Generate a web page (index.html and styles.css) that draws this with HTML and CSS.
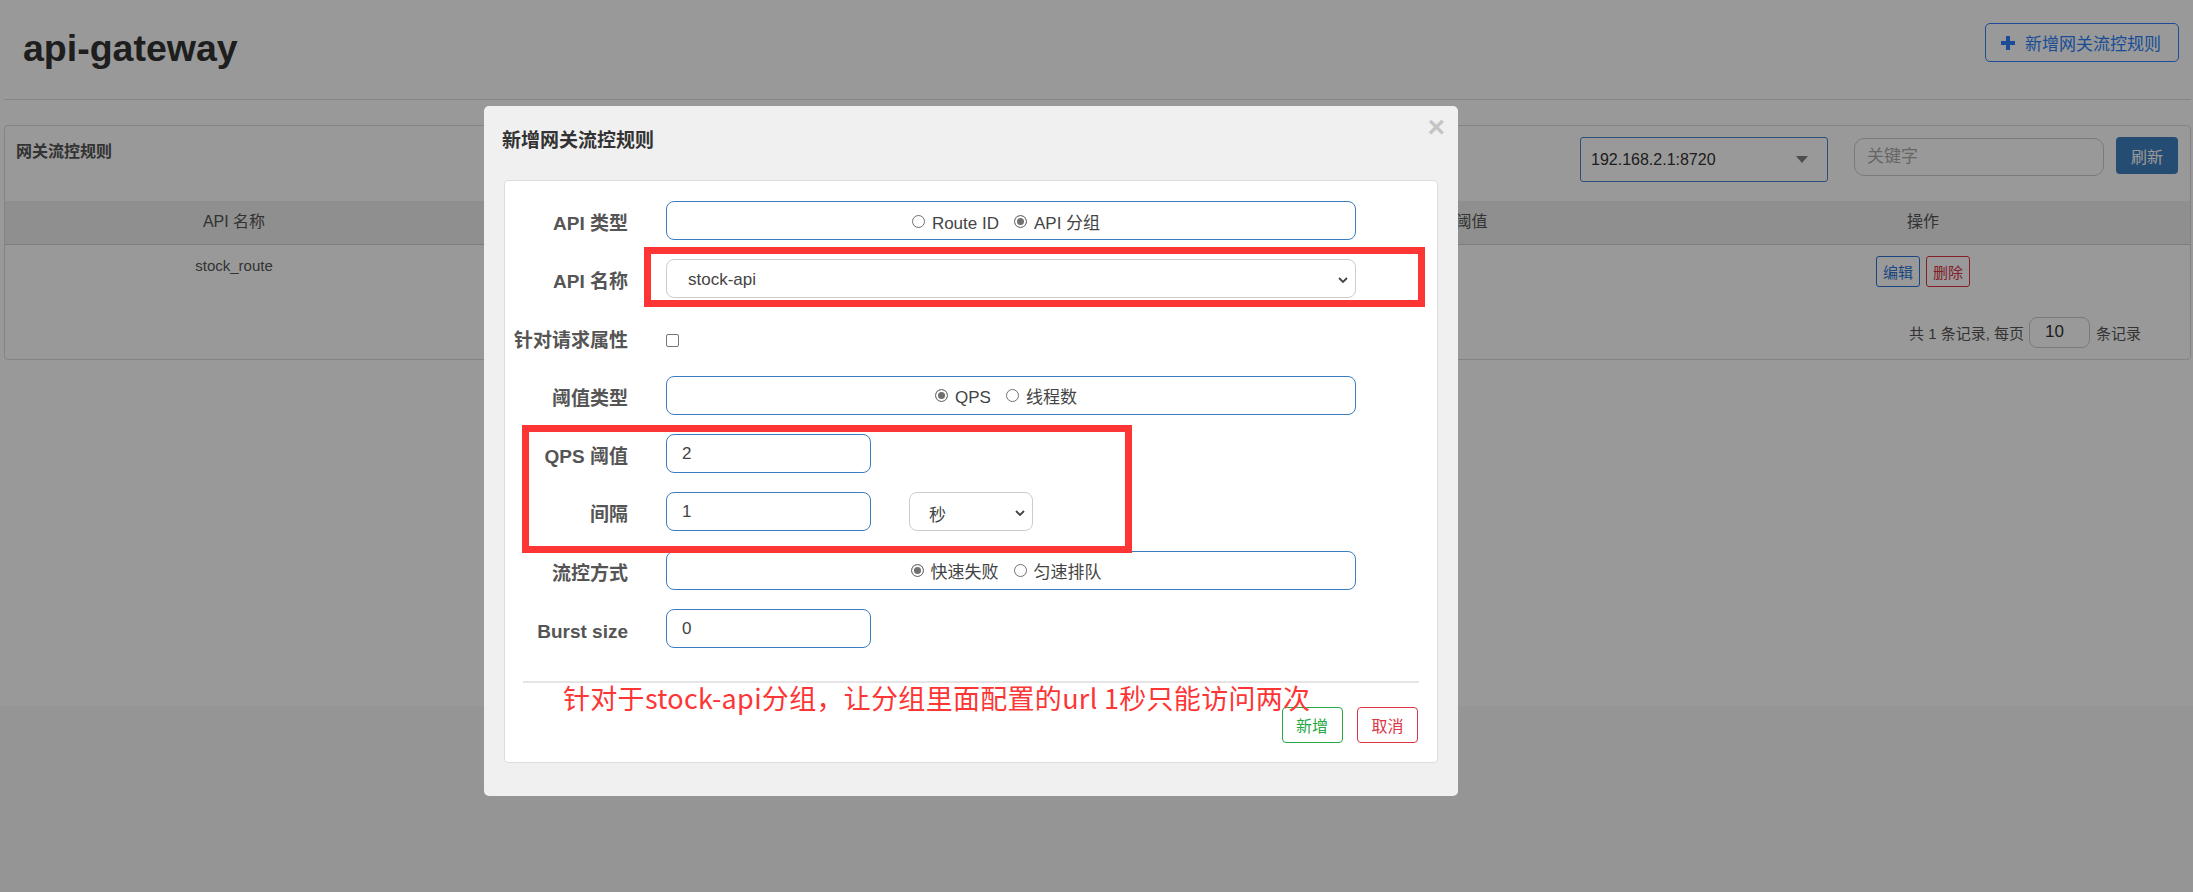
FILE: index.html
```html
<!DOCTYPE html>
<html lang="zh-CN">
<head>
<meta charset="utf-8">
<title>api-gateway</title>
<link rel="stylesheet" href="styles.css">
</head>
<body>
<div class="page">
  <header class="page-header">
    <h1 class="app-title">api-gateway</h1>
    <button class="btn-add-rule" type="button">
      <svg class="icon-plus" viewBox="0 0 14 14"><rect x="5" y="0" width="4" height="14"/><rect x="0" y="5" width="14" height="4"/></svg>
      <span>新增网关流控规则</span>
    </button>
  </header>

  <section class="panel">
    <div class="panel-head">
      <div class="panel-title">网关流控规则</div>
      <div class="panel-tools">
        <div class="machine-select">
          <span>192.168.2.1:8720</span>
          <svg class="caret" viewBox="0 0 12 7"><path d="M0 0h12L6 7z"/></svg>
        </div>
        <input class="search-input" type="text" placeholder="关键字">
        <button class="btn-refresh" type="button">刷新</button>
      </div>
    </div>
    <table class="rules-table">
      <colgroup>
        <col class="col-name"><col class="col-mid"><col class="col-mid"><col class="col-count"><col>
      </colgroup>
      <thead>
        <tr><th>API 名称</th><th>API 类型</th><th>阈值类型</th><th>单机阈值</th><th>操作</th></tr>
      </thead>
      <tbody>
        <tr>
          <td>stock_route</td>
          <td>Route ID</td>
          <td>QPS</td>
          <td></td>
          <td><div class="row-actions"><button class="btn-edit" type="button">编辑</button><button class="btn-del" type="button">删除</button></div></td>
        </tr>
      </tbody>
    </table>
    <div class="pager">
      <span>共 1 条记录, 每页</span>
      <input class="page-size" type="text" value="10">
      <span>条记录</span>
    </div>
  </section>
</div>

<div class="backdrop"></div>

<div class="modal">
  <div class="modal-header">
    <h4 class="modal-title">新增网关流控规则</h4>
  </div>
  <span class="modal-close">×</span>
  <div class="modal-body">
    <div class="form-card">
      <div class="form-grid">
        <label class="f-label">API 类型</label>
        <div class="f-box">
          <span class="radio"><span class="radio-dot"></span>Route ID</span>
          <span class="radio"><span class="radio-dot checked"></span>API 分组</span>
        </div>

        <label class="f-label">API 名称</label>
        <div class="f-select"><span>stock-api</span><svg class="chev" viewBox="0 0 10 6"><polyline points="1,1 5,5 9,1"/></svg></div>

        <label class="f-label">针对请求属性</label>
        <div class="check-cell"><span class="checkbox"></span></div>

        <label class="f-label">阈值类型</label>
        <div class="f-box">
          <span class="radio"><span class="radio-dot checked"></span>QPS</span>
          <span class="radio"><span class="radio-dot"></span>线程数</span>
        </div>

        <label class="f-label">QPS 阈值</label>
        <div class="f-cell"><input class="f-input" type="text" value="2"></div>

        <label class="f-label">间隔</label>
        <div class="f-cell">
          <input class="f-input" type="text" value="1">
          <div class="f-select unit"><span>秒</span><svg class="chev" viewBox="0 0 10 6"><polyline points="1,1 5,5 9,1"/></svg></div>
        </div>

        <label class="f-label">流控方式</label>
        <div class="f-box">
          <span class="radio"><span class="radio-dot checked"></span>快速失败</span>
          <span class="radio"><span class="radio-dot"></span>匀速排队</span>
        </div>

        <label class="f-label">Burst size</label>
        <div class="f-cell"><input class="f-input" type="text" value="0"></div>
      </div>
      <div class="form-divider"></div>
      <div class="form-actions">
        <button class="btn-save" type="button">新增</button>
        <button class="btn-cancel" type="button">取消</button>
      </div>
    </div>
  </div>
  <div class="mark mark-name"></div>
  <div class="mark mark-qps"></div>
  <div class="mark-note">针对于stock-api分组，让分组里面配置的url 1秒只能访问两次</div>
</div>
</body>
</html>
```

FILE: styles.css
```css
* { box-sizing: border-box; }
html, body { margin: 0; }
body {
  width: 2193px;
  height: 892px;
  overflow: hidden;
  background: #f8f8f8;
  font-family: "Liberation Sans", "Noto Sans CJK SC", Arial, sans-serif;
  color: #555;
}

.page {
  background: #fff;
  min-height: 706px;
  padding: 0 2px 0 4px;
}

.page-header {
  height: 100px;
  border-bottom: 1px solid #e0e0e0;
  display: flex;
  justify-content: space-between;
  align-items: flex-start;
  padding: 23px 12px 0 19px;
}
.app-title {
  margin: 5px 0 0;
  font-size: 37.5px;
  line-height: 40px;
  font-weight: 700;
  color: #333;
}
.btn-add-rule {
  display: flex;
  align-items: center;
  width: 194px;
  height: 39px;
  padding: 0 0 0 15px;
  border: 1px solid #2d7ff9;
  border-radius: 5px;
  background: #fff;
  color: #2d7ff9;
  font-family: inherit;
  font-size: 17px;
}
.icon-plus { width: 14px; height: 14px; fill: #2d7ff9; margin-right: 10px; }

.panel {
  margin-top: 25px;
  border: 1px solid #ddd;
  border-radius: 4px;
}
.panel-head {
  height: 75px;
  display: flex;
  justify-content: space-between;
  align-items: flex-start;
  padding: 11px 12px 0 11px;
}
.panel-title {
  margin-top: 3.5px;
  font-size: 16px;
  line-height: 22px;
  font-weight: 700;
  color: #555;
}
.panel-tools { display: flex; align-items: flex-start; }
.machine-select {
  width: 248px;
  height: 45px;
  display: flex;
  align-items: center;
  justify-content: space-between;
  padding: 0 19px 0 10px;
  border: 1px solid #4a86c8;
  border-radius: 3px;
  font-size: 16px;
  color: #333;
}
.caret { width: 12px; height: 7px; fill: #808080; }
.search-input {
  margin: 1px 0 0 26px;
  width: 250px;
  height: 38px;
  padding: 0 12px;
  border: 1px solid #ccc;
  border-radius: 10px;
  font-family: inherit;
  font-size: 17px;
  color: #333;
  outline: none;
}
.search-input::placeholder { color: #aaa; }
.btn-refresh {
  margin-left: 12px;
  width: 62px;
  height: 37px;
  border: 0;
  border-radius: 4px;
  background: #3f7fbf;
  color: #fff;
  font-family: inherit;
  font-size: 16px;
}

.rules-table {
  width: 100%;
  border-collapse: collapse;
  table-layout: fixed;
}
.col-name { width: 458px; }
.col-mid { width: 396px; }
.col-count { width: 401px; }
.rules-table th {
  height: 43px;
  padding: 0;
  background: #eee;
  border-bottom: 1px solid #d0d0d0;
  font-weight: 400;
  font-size: 16px;
  line-height: 20px;
  color: #555;
  text-align: center;
}
.rules-table td {
  padding: 11px 0;
  vertical-align: top;
  text-align: center;
  font-size: 15px;
  line-height: 20px;
  color: #555;
}
.row-actions { display: flex; justify-content: center; gap: 6px; }
.btn-edit, .btn-del {
  width: 44px;
  height: 31px;
  padding: 0;
  border: 1px solid;
  border-radius: 3px;
  background: #fff;
  font-family: inherit;
  font-size: 15px;
}
.btn-edit { color: #2a74d8; border-color: #2a74d8; }
.btn-del { color: #dc3545; border-color: #dc3545; }

.pager {
  display: flex;
  justify-content: flex-end;
  align-items: center;
  padding: 19px 49px 11px 0;
  font-size: 15px;
  color: #555;
}
.page-size {
  width: 61px;
  height: 31px;
  margin: 0 6px 0 5px;
  padding: 0 0 0 15px;
  border: 1px solid #ccc;
  border-radius: 8px;
  font-family: inherit;
  font-size: 17px;
  color: #333;
}

.backdrop {
  position: fixed;
  inset: 0;
  background: rgba(0, 0, 0, 0.4);
}

.modal {
  position: absolute;
  left: 484px;
  top: 106px;
  width: 974px;
  height: 690px;
  background: #f0f0f0;
  border-radius: 5px;
}
.modal-header {
  height: 74px;
  padding: 21px 0 0 18px;
}
.modal-title {
  margin: 0;
  font-size: 19px;
  line-height: 27px;
  font-weight: 700;
  color: #333;
}
.modal-close {
  position: absolute;
  top: 6px;
  right: 13px;
  font-size: 30px;
  line-height: 1;
  font-weight: 700;
  color: #c4c4c4;
}
.modal-body { padding: 0 20px; }
.form-card {
  background: #fff;
  border: 1px solid #ddd;
  border-radius: 4px;
  padding: 20px 0 19px;
}
.form-grid {
  display: grid;
  grid-template-columns: 123px 690px;
  grid-auto-rows: 39px;
  column-gap: 38px;
  row-gap: 19.3px;
}
.f-label {
  text-align: right;
  padding-top: 9px;
  font-size: 19px;
  line-height: 27px;
  font-weight: 700;
  color: #555;
  white-space: nowrap;
}
.f-box {
  display: flex;
  justify-content: center;
  align-items: center;
  padding: 6px 10px 0 0;
  border: 1px solid #3a7ebf;
  border-radius: 8px;
  font-size: 17px;
  line-height: 20px;
  color: #444;
}
.radio { display: inline-flex; align-items: center; margin-right: 15px; }
.radio:last-child { margin-right: 0; }
.radio-dot {
  width: 13px;
  height: 13px;
  margin: 0 7px 5px 0;
  border: 1px solid #707070;
  border-radius: 50%;
  background: #fff;
}
.radio-dot.checked { background: #707070; box-shadow: inset 0 0 0 2px #fff; }
.check-cell { padding-top: 16px; }
.checkbox {
  display: block;
  width: 13px;
  height: 13px;
  border: 1px solid #767676;
  border-radius: 2px;
  background: #fff;
}
.f-cell { display: flex; gap: 38px; }
.f-input {
  width: 205px;
  height: 39px;
  padding: 0 15px;
  border: 1px solid #3a7ebf;
  border-radius: 8px;
  font-family: inherit;
  font-size: 17px;
  color: #444;
  outline: none;
}
.f-select {
  display: flex;
  align-items: center;
  justify-content: space-between;
  height: 39px;
  padding: 3px 7px 0 21px;
  border: 1px solid #ccc;
  border-radius: 8px;
  font-size: 17px;
  color: #444;
}
.f-select.unit { width: 124px; padding-left: 19px; }
.chev { width: 10px; height: 6px; fill: none; stroke: #444; stroke-width: 1.8; }
.form-divider {
  height: 2px;
  margin: 32.6px 18px 0 17.5px;
  background: #e5e5e5;
}
.form-actions {
  display: flex;
  justify-content: flex-end;
  gap: 14.5px;
  margin-top: 24.3px;
  padding-right: 19px;
}
.btn-save, .btn-cancel {
  width: 61px;
  height: 36px;
  padding: 0;
  border: 1px solid;
  border-radius: 4px;
  background: #fff;
  font-family: inherit;
  font-size: 16px;
}
.btn-save { color: #28a745; border-color: #28a745; }
.btn-cancel { color: #dc3545; border-color: #dc3545; }

.mark {
  position: absolute;
  border: 7px solid #fd3535;
}
.mark-name { left: 160px; top: 141px; width: 781px; height: 60px; }
.mark-qps { left: 38px; top: 319px; width: 610px; height: 128px; }
.mark-note {
  position: absolute;
  left: 79px;
  top: 578px;
  font-family: "Noto Sans CJK SC", sans-serif;
  font-size: 27px;
  line-height: 27px;
  letter-spacing: 0.3px;
  color: #fd3535;
  white-space: nowrap;
}
```
